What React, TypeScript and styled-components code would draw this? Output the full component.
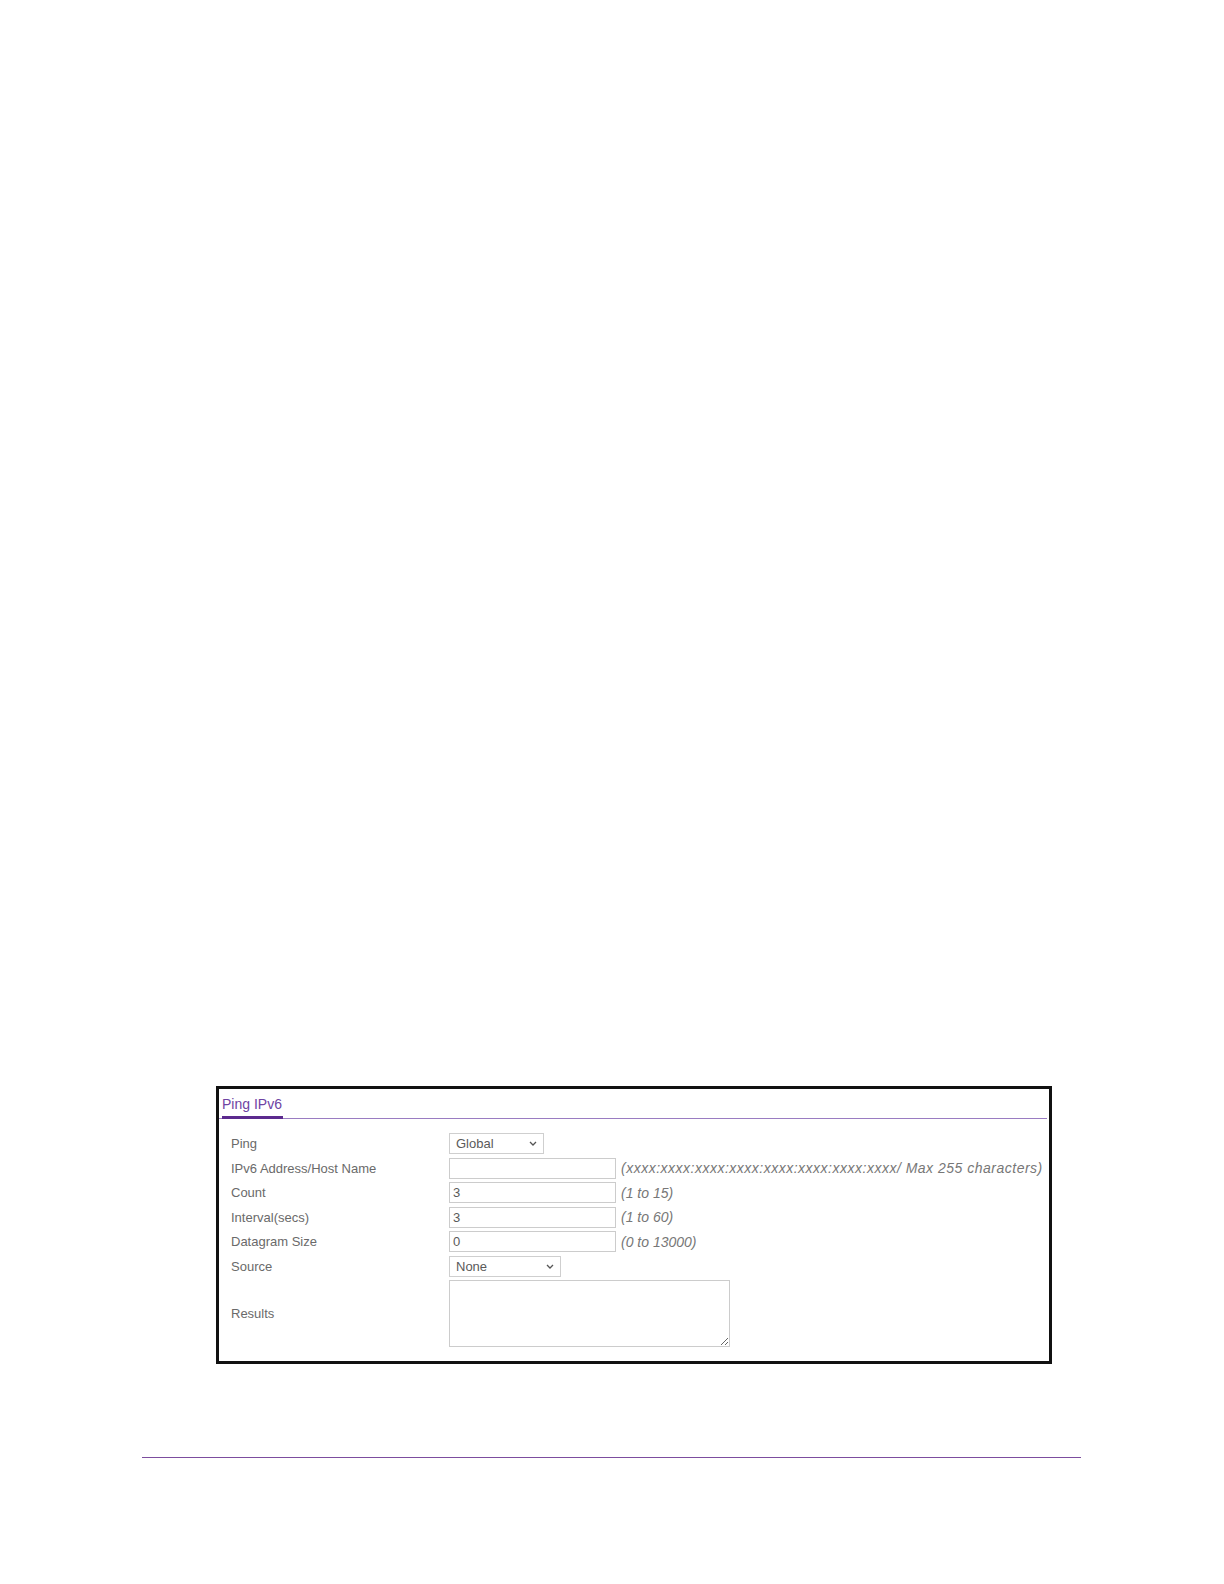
import React from "react";
import styled, { createGlobalStyle } from "styled-components";

const Global = createGlobalStyle`
  html, body { margin: 0; padding: 0; background: #ffffff; }
  body { font-family: "Liberation Sans", Arial, sans-serif; }
  * { box-sizing: border-box; }
`;

const Page = styled.div`
  width: 1224px;
  min-height: 1584px;
  padding-top: 1086px;
  background: #ffffff;
`;

const Panel = styled.section`
  margin-left: 216px;
  width: 836px;
  border: 3px solid #111111;
  background: #ffffff;
`;

const Header = styled.div`
  display: flex;
  height: 30px;
  border-bottom: 1px solid #9a7cc2;
  margin-right: 2px;
`;

const Tab = styled.div`
  margin-left: 3px;
  margin-bottom: -1px;
  padding: 3px 1px 0 0;
  height: 30px;
  line-height: 24px;
  font-size: 14px;
  color: #6e43a3;
  border-bottom: 3px solid #5c2a8e;
`;

const Form = styled.div`
  padding: 14px 0 14px 12px;
  display: flex;
  flex-direction: column;
`;

const Row = styled.div<{ $tall?: boolean }>`
  display: grid;
  grid-template-columns: 218px auto;
  align-items: ${(p) => (p.$tall ? "center" : "start")};
  height: ${(p) => (p.$tall ? "67px" : "24.5px")};
`;

const Label = styled.div`
  font-size: 13px;
  color: #6a6a6a;
  line-height: 21px;
  height: 21px;
`;

const Control = styled.div`
  display: flex;
  align-items: center;
  height: 21px;
`;

const SelectBox = styled.div<{ $w: number }>`
  width: ${(p) => p.$w}px;
  height: 21px;
  border: 1px solid #cfcfcf;
  background: #ffffff;
  display: flex;
  align-items: center;
  justify-content: space-between;
  padding: 0 6px 0 6px;
  font-size: 13px;
  color: #5a5a5a;
`;

const Input = styled.input`
  width: 167px;
  height: 21px;
  border: 1px solid #cccccc;
  padding: 0 3px;
  margin: 0;
  font-family: "Liberation Sans", Arial, sans-serif;
  font-size: 13px;
  color: #5a5a5a;
  background: #ffffff;
  outline: none;
`;

const Hint = styled.span<{ $spread?: boolean }>`
  margin-left: 5px;
  font-size: 14px;
  font-style: italic;
  color: #777777;
  white-space: nowrap;
  letter-spacing: ${(p) => (p.$spread ? "0.5px" : "0")};
`;

const Area = styled.textarea`
  display: block;
  width: 281px;
  height: 67px;
  margin: 0;
  border: 1px solid #cccccc;
  padding: 3px;
  font-family: "Liberation Sans", Arial, sans-serif;
  font-size: 13px;
  color: #555555;
  outline: none;
`;

const FooterRule = styled.div`
  margin-top: 93px;
  margin-left: 142px;
  width: 939px;
  border-top: 1px solid #7c4d9e;
`;

const Chevron = () => (
  <svg width="8" height="5" viewBox="0 0 8 5" fill="none">
    <path d="M1 1 L4 4 L7 1" stroke="#555" strokeWidth="1.3" />
  </svg>
);

const Select = ({ value, w }: { value: string; w: number }) => (
  <SelectBox $w={w}>
    <span>{value}</span>
    <Chevron />
  </SelectBox>
);

const fields = [
  { label: "IPv6 Address/Host Name", value: "", hint: "(xxxx:xxxx:xxxx:xxxx:xxxx:xxxx:xxxx:xxxx/ Max 255 characters)", spread: true },
  { label: "Count", value: "3", hint: "(1 to 15)" },
  { label: "Interval(secs)", value: "3", hint: "(1 to 60)" },
  { label: "Datagram Size", value: "0", hint: "(0 to 13000)" },
];

export default function App() {
  return (
    <>
      <Global />
      <Page>
        <Panel>
          <Header>
            <Tab>Ping IPv6</Tab>
          </Header>
          <Form>
            <Row>
              <Label>Ping</Label>
              <Control>
                <Select value="Global" w={95} />
              </Control>
            </Row>
            {fields.map((f) => (
              <Row key={f.label}>
                <Label>{f.label}</Label>
                <Control>
                  <Input defaultValue={f.value} />
                  <Hint $spread={f.spread}>{f.hint}</Hint>
                </Control>
              </Row>
            ))}
            <Row>
              <Label>Source</Label>
              <Control>
                <Select value="None" w={112} />
              </Control>
            </Row>
            <Row $tall>
              <Label>Results</Label>
              <Area />
            </Row>
          </Form>
        </Panel>
        <FooterRule />
      </Page>
    </>
  );
}
